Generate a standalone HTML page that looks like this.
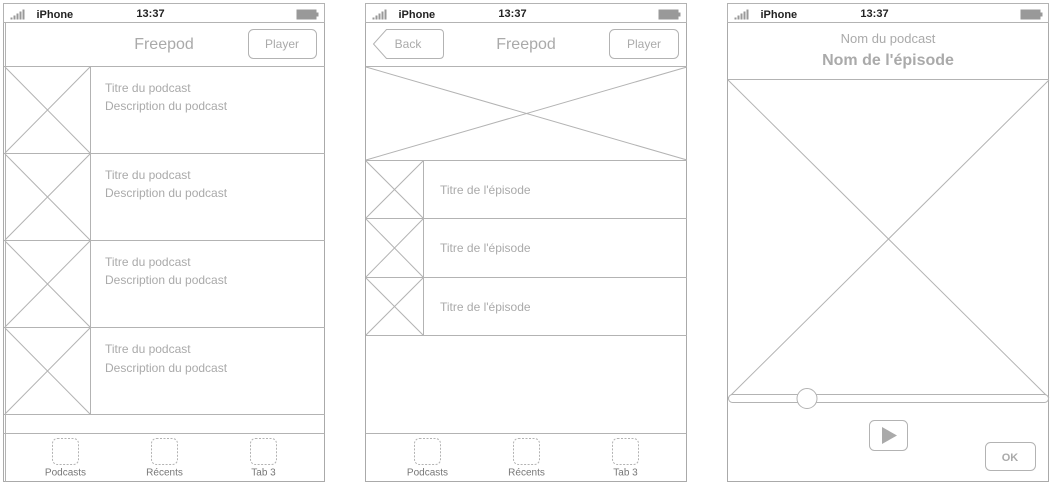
<!DOCTYPE html>
<html><head><meta charset="utf-8"><style>
html,body{margin:0;padding:0;background:#fff;width:1051px;height:484px;overflow:hidden}
text{font-family:"Liberation Sans",sans-serif}
</style></head><body>
<svg width="1051" height="484" xmlns="http://www.w3.org/2000/svg" fill="none" stroke="#b3b3b3" stroke-width="1">
<defs>
<g id="sb">
  <rect x="0" y="0" width="321" height="19" fill="#fff" stroke="#b3b3b3"/>
  <g fill="#999" stroke="none">
    <rect x="7" y="14" width="2" height="2"/><rect x="10" y="12" width="2" height="4"/><rect x="13" y="10" width="2" height="6"/><rect x="16" y="8" width="2" height="8"/><rect x="19" y="6" width="2" height="10"/>
    <rect x="293" y="6" width="20" height="10"/><rect x="313" y="9" width="2" height="4"/>
  </g>
  <text x="33" y="14.5" font-size="11" font-weight="bold" fill="#222" stroke="none">iPhone</text>
  <text x="147" y="13.5" font-size="11" font-weight="bold" fill="#222" stroke="none" text-anchor="middle">13:37</text>
</g>
<g id="tab">
  <line x1="0" y1="0" x2="321" y2="0"/>
  <g stroke-dasharray="2,1.5">
    <rect x="49" y="5" width="26" height="26" rx="5"/>
    <rect x="148" y="5" width="26" height="26" rx="5"/>
    <rect x="247" y="5" width="26" height="26" rx="5"/>
  </g>
  <g fill="#777" stroke="none" font-size="10" text-anchor="middle">
    <text x="62" y="42">Podcasts</text><text x="161" y="42">Récents</text><text x="260" y="42">Tab 3</text>
  </g>
</g>
</defs>

<!-- Phone 1 -->
<rect x="3.5" y="3.5" width="321" height="478" stroke="#aaa"/>
<line x1="5.5" y1="22" x2="5.5" y2="482" />
<use href="#sb" x="3.5" y="3.5"/>
<text x="164" y="49" font-size="16" fill="#aaa" stroke="none" text-anchor="middle">Freepod</text>
<rect x="248.5" y="29.5" width="68" height="29" rx="5"/>
<text x="282" y="48" font-size="12" fill="#aaa" stroke="none" text-anchor="middle">Player</text>
<line x1="4" y1="66.5" x2="325" y2="66.5"/>
<g>
  <line x1="4" y1="153.5" x2="325" y2="153.5"/><line x1="4" y1="240.5" x2="325" y2="240.5"/><line x1="4" y1="327.5" x2="325" y2="327.5"/><line x1="4" y1="414.5" x2="325" y2="414.5"/>
  <line x1="90.5" y1="66" x2="90.5" y2="414"/>
  <path d="M5 67L90 153M90 67L5 153M5 154L90 240M90 154L5 240M5 241L90 327M90 241L5 327M5 328L90 414M90 328L5 414"/>
</g>
<g fill="#aaa" stroke="none" font-size="12">
  <text x="105" y="92">Titre du podcast</text><text x="105" y="110">Description du podcast</text>
  <text x="105" y="179">Titre du podcast</text><text x="105" y="197">Description du podcast</text>
  <text x="105" y="266">Titre du podcast</text><text x="105" y="284">Description du podcast</text>
  <text x="105" y="353">Titre du podcast</text><text x="105" y="372">Description du podcast</text>
</g>
<use href="#tab" x="3.5" y="433.5"/>

<!-- Phone 2 -->
<rect x="365.5" y="3.5" width="321" height="478" stroke="#aaa"/>
<use href="#sb" x="365.5" y="3.5"/>
<path d="M386.5 29.5H439.5Q443.5 29.5 443.5 33.5V54.5Q443.5 58.5 439.5 58.5H386.5L373.5 44Z"/>
<text x="408" y="48" font-size="12" fill="#aaa" stroke="none" text-anchor="middle">Back</text>
<text x="526" y="49" font-size="16" fill="#aaa" stroke="none" text-anchor="middle">Freepod</text>
<rect x="609.5" y="29.5" width="69" height="29" rx="5"/>
<text x="644" y="48" font-size="12" fill="#aaa" stroke="none" text-anchor="middle">Player</text>
<line x1="366" y1="66.5" x2="687" y2="66.5"/>
<path d="M366 67L687 160M687 67L366 160"/>
<line x1="366" y1="160.5" x2="687" y2="160.5"/><line x1="366" y1="218.5" x2="687" y2="218.5"/><line x1="366" y1="277.5" x2="687" y2="277.5"/><line x1="366" y1="335.5" x2="687" y2="335.5"/>
<line x1="423.5" y1="160" x2="423.5" y2="335"/>
<path d="M366 161L423 218M423 161L366 218M366 219L423 277M423 219L366 277M366 278L423 335M423 278L366 335"/>
<g fill="#aaa" stroke="none" font-size="12">
  <text x="440" y="194">Titre de l'épisode</text><text x="440" y="252">Titre de l'épisode</text><text x="440" y="311">Titre de l'épisode</text>
</g>
<use href="#tab" x="365.5" y="433.5"/>

<!-- Phone 3 -->
<rect x="727.5" y="3.5" width="321" height="478" stroke="#aaa"/>
<use href="#sb" x="727.5" y="3.5"/>
<text x="888" y="43" font-size="13" fill="#aaa" stroke="none" text-anchor="middle">Nom du podcast</text>
<text x="888" y="65" font-size="16" font-weight="bold" fill="#aaa" stroke="none" text-anchor="middle">Nom de l'épisode</text>
<line x1="728" y1="79.5" x2="1049" y2="79.5"/>
<path d="M728 80L1049 398M1049 80L728 398"/>
<rect x="728.5" y="394.5" width="320" height="8" rx="4" fill="#fff"/>
<circle cx="807" cy="398.5" r="10" fill="#fff"/>
<rect x="869.5" y="420.5" width="38" height="30" rx="5"/>
<path d="M882 427V444L897 435.5Z" fill="#aaa" stroke="none"/>
<rect x="985.5" y="442.5" width="50" height="28" rx="5"/>
<text x="1010" y="461" font-size="11" font-weight="bold" fill="#aaa" stroke="none" text-anchor="middle">OK</text>
</svg>
</body></html>
